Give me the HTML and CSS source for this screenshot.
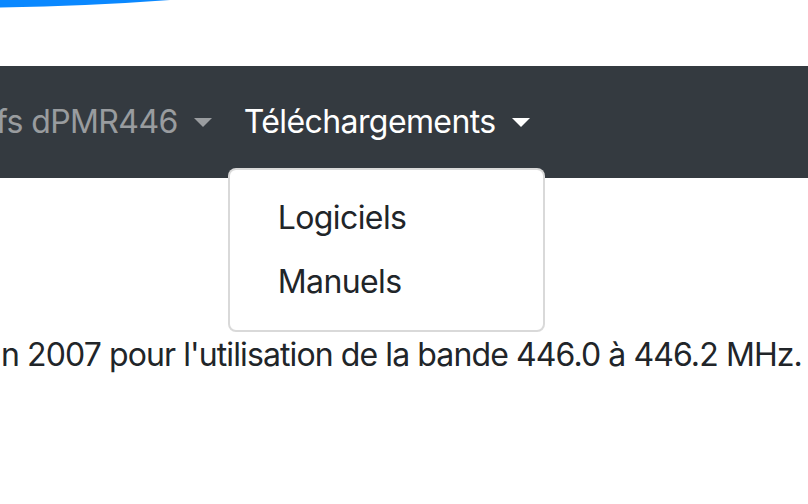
FILE: index.html
```html
<!DOCTYPE html>
<html lang="fr">

<head>
    <meta charset="UTF-8">
    <meta name="viewport" content="width=device-width, initial-scale=1.0">
    <title>dPMR446</title>
    <link rel="stylesheet" href="styles.css">
</head>

<body>
    <div class="banner">
        <svg class="wave" width="808" height="66" viewBox="0 0 808 66">
            <path d="M0 0 L170 0 Q90 6 0 7.5 Z" fill="#0a88ff"/>
        </svg>
    </div>

    <nav class="navbar">
        <ul class="nav">
            <li class="nav-item first">
                <a class="nav-link dropdown-toggle" href="#">fs dPMR446</a>
            </li>
            <li class="nav-item open">
                <a class="nav-link dropdown-toggle active" href="#">Téléchargements</a>
                <div class="dropdown-menu">
                    <a class="dropdown-item" href="#">Logiciels</a>
                    <a class="dropdown-item" href="#">Manuels</a>
                </div>
            </li>
        </ul>
    </nav>

    <div class="content">
        <p>n 2007 pour l'utilisation de la bande 446.0 à 446.2 MHz.</p>
    </div>
</body>

</html>
```

FILE: styles.css
```css
body {
    margin: 0;
    font-family: Inter, "Liberation Sans", sans-serif;
    font-size: 32px;
    line-height: 48px;
    letter-spacing: -0.6px;
    color: #212529;
    background: #fff;
    overflow: hidden;
}

.banner {
    height: 66px;
}

.wave {
    display: block;
}

.navbar {
    background-color: #343a40;
    padding: 16px 0;
}

.nav {
    display: flex;
    list-style: none;
    margin: 0 0 0 -4px;
    padding: 0;
}

.nav-item {
    position: relative;
}

.nav-link {
    display: block;
    padding: 16px;
    color: rgba(255, 255, 255, .5);
    text-decoration: none;
}

.first .nav-link {
    padding-left: 0;
}

.nav-link.active {
    color: #fff;
}

.dropdown-toggle::after {
    display: inline-block;
    margin-left: 16px;
    vertical-align: 6px;
    content: "";
    border-top: 9.6px solid;
    border-right: 9.6px solid transparent;
    border-left: 9.6px solid transparent;
}

.dropdown-menu {
    position: absolute;
    top: 100%;
    left: 0;
    margin-top: 6px;
    min-width: 317px;
    box-sizing: border-box;
    padding: 16px 0;
    background: #fff;
    border: 2px solid rgba(0, 0, 0, .15);
    border-radius: 8px;
}

.dropdown-item {
    display: block;
    padding: 8px 48px;
    color: #212529;
    text-decoration: none;
    white-space: nowrap;
}

.content {
    padding-top: 153px;
}

.content p {
    margin: 0 0 0 1px;
    white-space: nowrap;
    letter-spacing: -0.9px;
}
```
